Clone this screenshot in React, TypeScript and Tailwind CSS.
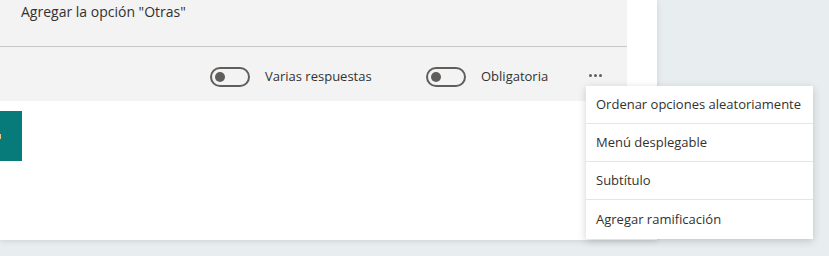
import React from "react";

function Toggle() {
  return (
    <div className="w-[40px] h-[20px] rounded-full border-2 border-[#605e5c] flex items-center pl-[3px] box-border">
      <div className="w-[10px] h-[10px] rounded-full bg-[#605e5c]" />
    </div>
  );
}

export default function App() {
  const items = [
    "Ordenar opciones aleatoriamente",
    "Menú desplegable",
    "Subtítulo",
    "Agregar ramificación",
  ];
  return (
    <div
      className="relative w-[829px] h-[256px] bg-[#e8eef0] overflow-hidden text-[#323130]"
      style={{ fontFamily: '"Segoe UI", "Open Sans", "Noto Sans", sans-serif' }}
    >
      <div className="w-[657px] h-[240px] bg-white shadow-[0_1px_6px_rgba(0,0,0,0.12)]">
        <div className="w-[627px] h-[101px] bg-[#f3f3f3] flex flex-col">
          <div className="h-[47px] border-b border-[#c8c8c8] pl-[21px] pt-[1px] text-[14px] leading-[22px] whitespace-nowrap">
            Agregar la opción "Otras"
          </div>
          <div className="flex-1 flex items-center pt-[6px] text-[13px] whitespace-nowrap">
            <div className="ml-[210px] flex items-center">
              <Toggle />
              <span className="ml-[15px] w-[105px]">Varias respuestas</span>
            </div>
            <div className="ml-[56px] flex items-center">
              <Toggle />
              <span className="ml-[15px] w-[67px]">Obligatoria</span>
            </div>
            <div className="ml-[41px] flex items-center gap-[2px] mb-[3px]">
              <span className="w-[3px] h-[3px] rounded-full bg-[#605e5c]" />
              <span className="w-[3px] h-[3px] rounded-full bg-[#605e5c]" />
              <span className="w-[3px] h-[3px] rounded-full bg-[#605e5c]" />
            </div>
          </div>
        </div>
        <div className="mt-[10px] w-[22px] h-[50px] bg-[#077a7a] flex items-center">
          <div className="w-[1px] h-[5px] bg-[#e8c98a]" />
        </div>
      </div>
      <div className="absolute left-[586px] top-[86px] w-[227px] bg-white shadow-[0_2px_8px_rgba(0,0,0,0.18)] text-[13px] whitespace-nowrap">
        {items.map((t, i) => (
          <div
            key={t}
            className={
              "pl-[10px] flex items-center " +
              (i < items.length - 1 ? "h-[38px] border-b border-[#e5e5e5]" : "h-[39px]")
            }
          >
            {t}
          </div>
        ))}
      </div>
    </div>
  );
}
